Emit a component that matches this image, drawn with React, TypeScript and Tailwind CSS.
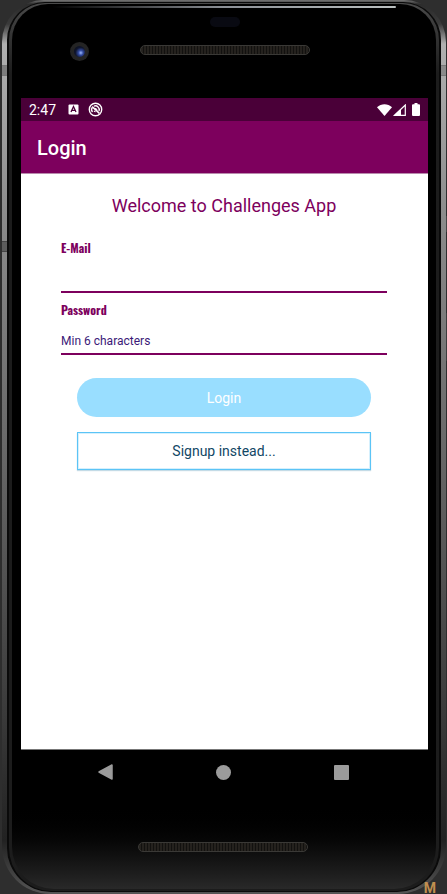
import React, { useState } from "react";

function SpeakerGrille() {
  return (
    <div className="h-[10px] w-[170px] rounded-full border border-[#3a3936] bg-[repeating-linear-gradient(90deg,#25221e_0px,#25221e_2px,#12110f_2px,#12110f_3px)]" />
  );
}

function FrameBands() {
  return (
    <div aria-hidden="true">
      <div className="absolute left-[2px] top-[65px] h-[11px] w-[5px] border-y border-[#777] bg-[#7d7d7d]" />
      <div className="absolute right-[1px] top-[65px] h-[11px] w-[5px] border-y border-[#777] bg-[#8a8a8a]" />
      <div className="absolute left-[2px] top-[241px] h-[11px] w-[5px] border-y border-[#444] bg-[#5c5c5c]" />
      <div className="absolute right-0 top-[216px] h-4 w-[1px] bg-[#444]" />
      <div className="absolute right-0 top-[313px] h-12 w-[1px] bg-[#3c3c3c]" />
    </div>
  );
}

function StatusBar() {
  return (
    <div className="flex h-[23px] items-center bg-[#4a0038] pl-2 pr-2 text-white">
      <span className="text-sm">2:47</span>
      <svg className="ml-3 h-[11px] w-[11px]" viewBox="0 0 11 11" aria-hidden="true">
        <rect x="0.5" y="0.5" width="10" height="10" rx="1" fill="#fff" />
        <path d="M3 8 5.5 2.5 8 8M4 6.3h3" fill="none" stroke="#4a0038" strokeWidth="1.3" />
      </svg>
      <svg className="ml-[9px] h-[15px] w-[15px]" viewBox="0 0 15 15" fill="none" stroke="#fff" aria-hidden="true">
        <circle cx="7.5" cy="7.5" r="6.2" strokeWidth="1.4" />
        <path d="M4.5 10A3.8 3.8 0 0 1 4.3 5.4M6 4.1a3.8 3.8 0 0 1 5 4.8" strokeWidth="1.4" />
        <path d="M6.6 6.6a1.8 1.8 0 0 1 2.3 1.8M6 8.800a2 2 0 0 0 1.600 1" strokeWidth="1.1" />
        <path d="m4.2 4.6 7.200 6.800" strokeWidth="1.5" />
      </svg>
      <svg className="ml-auto h-3 w-[15px]" viewBox="0 0 15 12" aria-hidden="true">
        <path d="M0 3.2C4.2-.7 10.8-.7 15 3.2L7.5 12Z" fill="#fff" />
      </svg>
      <svg className="ml-[1px] h-3 w-[13px]" viewBox="0 0 13 12" aria-hidden="true">
        <path d="M1.5 11.3 12.3 1v10.3Z" fill="none" stroke="#fff" strokeWidth="1.2" />
        <path d="M1.5 11.3 8 5v6.3Z" fill="#fff" />
      </svg>
      <svg className="ml-[6px] h-[13px] w-2" viewBox="0 0 8 13" aria-hidden="true">
        <path d="M2.5 0h3v1.3H7a1 1 0 0 1 1 1V12a1 1 0 0 1-1 1H1a1 1 0 0 1-1-1V2.3a1 1 0 0 1 1-1h1.5Z" fill="#fff" />
      </svg>
    </div>
  );
}

type FieldProps = {
  id: string;
  label: string;
  type: string;
  placeholder?: string;
};

function Field({ id, label, type, placeholder }: FieldProps) {
  const [value, setValue] = useState("");
  return (
    <div className="flex flex-col">
      <label htmlFor={id} className="font-[Oswald,sans-serif] text-xs leading-5 font-bold text-[#7d005d]">
        {label}
      </label>
      <input
        id={id}
        type={type}
        value={value}
        placeholder={placeholder}
        onChange={(event) => setValue(event.target.value)}
        className="mt-2 h-[27px] w-full border-b-2 border-[#7d005d] bg-transparent text-xs text-[#3b1a78] outline-none placeholder:text-[#3b1a78]"
      />
    </div>
  );
}

function LoginScreen() {
  return (
    <div className="flex flex-1 flex-col bg-white">
      <StatusBar />
      <header className="flex h-[53px] items-center border-b border-[#b98aad] bg-[#7d005d] px-4 pt-[2px]">
        <h1 className="text-xl font-medium text-white">Login</h1>
      </header>
      <main className="flex flex-col pt-5 pr-[41px] pl-10">
        <h2 className="text-center text-lg leading-6 text-[#7d005d]">Welcome to Challenges App</h2>
        <form className="flex flex-col" onSubmit={(event) => event.preventDefault()}>
          <div className="mt-5 flex flex-col gap-[7px]">
            <Field id="email" label="E-Mail" type="email" />
            <Field id="password" label="Password" type="password" placeholder="Min 6 characters" />
          </div>
          <div className="mt-[23px] flex flex-col gap-[15px] px-4">
            <button type="submit" className="h-[39px] rounded-full bg-[#99deff] text-sm text-white">
              Login
            </button>
            <button
              type="button"
              className="h-[38px] border border-[#5bc4f6] bg-white text-sm text-[#114765] shadow-[0_1px_1px_#c4dbe6,inset_0_0_0_1px_#d5f0fd]"
            >
              Signup instead...
            </button>
          </div>
        </form>
      </main>
    </div>
  );
}

function NavigationBar() {
  return (
    <nav className="flex h-[45px] items-center justify-between border-t border-[#777] pr-[79px] pl-[77px]">
      <button type="button" aria-label="Back">
        <svg className="h-4 w-[15px]" viewBox="0 0 15 16">
          <path d="M1 8 14 1v14Z" fill="#9b9b9b" stroke="#9b9b9b" strokeWidth="1.5" strokeLinejoin="round" />
        </svg>
      </button>
      <button type="button" aria-label="Home" className="h-[15px] w-[15px] rounded-full bg-[#9b9b9b]" />
      <button type="button" aria-label="Overview" className="h-[15px] w-[15px] rounded-[1px] bg-[#9b9b9b]" />
    </nav>
  );
}

export default function App() {
  return (
    <div className="relative flex min-h-screen overflow-hidden bg-[#2e2e2e] pr-[1px] pl-[2px] font-[Roboto,sans-serif]">
      <span
        className="absolute right-[11px] bottom-0 z-10 text-sm leading-3 font-bold text-[#c08f50]"
        aria-hidden="true"
      >
        M
      </span>
      <div className="relative flex flex-1 rounded-t-[42px] rounded-b-[48px] bg-[linear-gradient(180deg,#777_0px,#2c2c2c_4px,#3a3a3a_24px,#b0b0b0_44px,#8a8a8a_25%,#686868_50%,#3a3a3a_80%,#222_94%,#555_100%)] px-[5px] pt-[2px] pb-[2px]">
        <div className="flex flex-1 rounded-t-[38px] rounded-b-[44px] border-x-2 border-t border-b border-[#0a0a0a] bg-linear-to-b from-[#4a4a4a] via-[#1c1c1c] via-8% to-[#1c1c1c] px-[3px] pt-[1px] pb-[2px]">
          <div className="relative flex flex-1 flex-col rounded-t-[36px] rounded-b-[42px] bg-linear-to-b from-black from-90% to-[#292929] pr-[8px] pl-[9px]">
            <div className="absolute top-[2px] right-10 left-10 h-[2px] rounded-full bg-linear-to-r from-transparent via-[#8d9197] to-[#bbc0c1]" />
            <div className="relative flex h-[94px] items-start justify-center pt-[41px]">
              <SpeakerGrille />
              <div className="absolute top-[13px] h-[10px] w-[30px] rounded-full bg-[#090a12]" />
              <div className="absolute top-[38px] left-[49px] flex h-[19px] w-[19px] items-center justify-center rounded-full bg-[#242424]">
                <div className="h-[11px] w-[11px] rounded-full bg-[radial-gradient(circle_at_62%_62%,#9cb7ff_0%,#31499e_25%,#10162e_55%,#080a12_100%)]" />
              </div>
            </div>
            <LoginScreen />
            <NavigationBar />
            <div className="flex h-[95px] justify-center pt-12 pr-1">
              <SpeakerGrille />
            </div>
          </div>
        </div>
      </div>
      <FrameBands />
    </div>
  );
}
